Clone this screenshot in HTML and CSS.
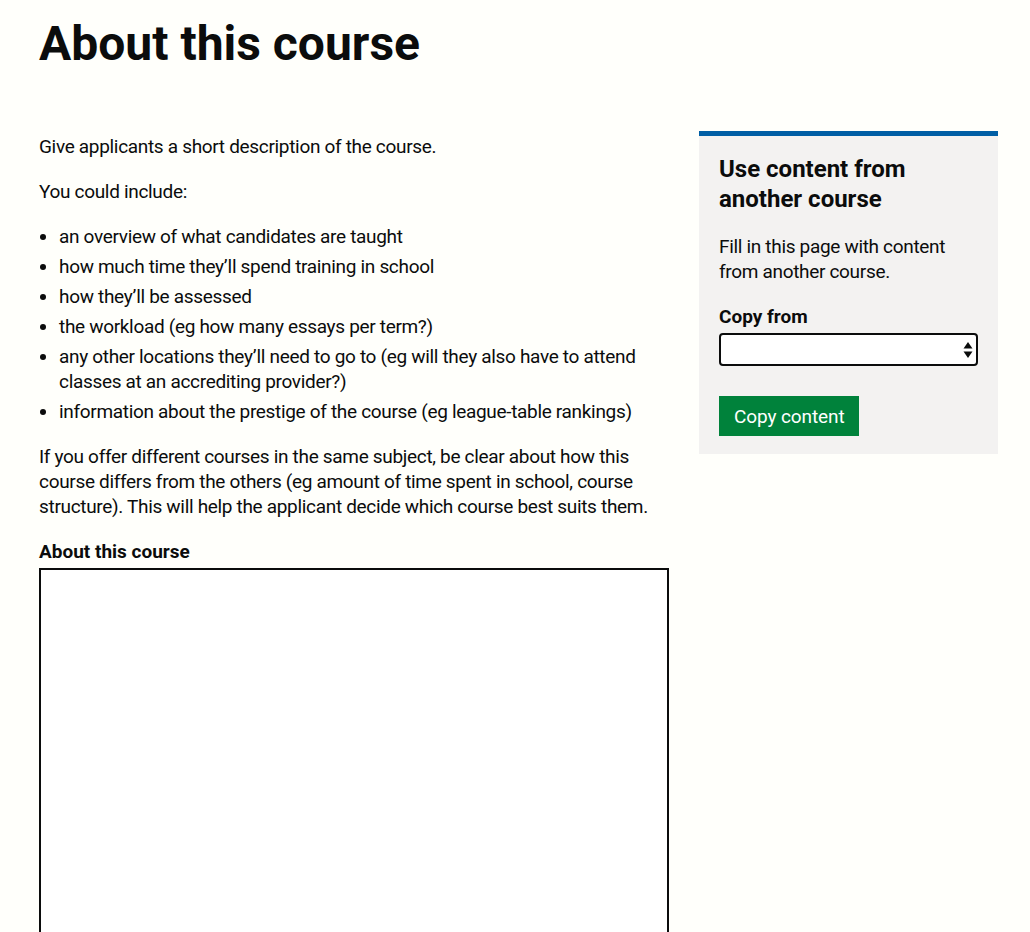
FILE: index.html
```html
<!DOCTYPE html>
<html lang="en">
<head>
<meta charset="utf-8">
<title>About this course</title>
<link rel="stylesheet" href="styles.css">
</head>
<body>
<main class="container">
  <h1 class="heading-xl">About this course</h1>
  <div class="row">
    <div class="col-main">
      <p class="body">Give applicants a short description of the course.</p>
      <p class="body">You could include:</p>
      <ul class="bullets">
        <li>an overview of what candidates are taught</li>
        <li>how much time they’ll spend training in school</li>
        <li>how they’ll be assessed</li>
        <li>the workload (eg how many essays per term?)</li>
        <li>any other locations they’ll need to go to (eg will they also have to attend classes at an accrediting provider?)</li>
        <li>information about the prestige of the course (eg league-table rankings)</li>
      </ul>
      <p class="body">If you offer different courses in the same subject, be clear about how this course differs from the others (eg amount of time spent in school, course structure). This will help the applicant decide which course best suits them.</p>
      <label class="label label-main" for="about">About this course</label>
      <textarea class="textarea" id="about"></textarea>
    </div>
    <aside class="col-side">
      <div class="panel">
        <h2 class="heading-m">Use content from another course</h2>
        <p class="body">Fill in this page with content from another course.</p>
        <label class="label label-side" for="copy">Copy from</label>
        <div class="select-wrap">
          <select class="select" id="copy"><option></option></select>
          <svg class="select-arrows" width="10" height="18" viewBox="0 0 10 18" aria-hidden="true">
            <path d="M5 1 L9.5 7.5 H0.5 Z" fill="#0b0c0c"/>
            <path d="M5 17 L9.5 10.5 H0.5 Z" fill="#0b0c0c"/>
          </svg>
        </div>
        <button class="button" type="button">Copy content</button>
      </div>
    </aside>
  </div>
</main>
</body>
</html>
```
FILE: styles.css
```css
html, body {
  margin: 0;
  padding: 0;
  background: #fffffb;
}
body {
  font-family: Roboto, "Liberation Sans", sans-serif;
  color: #0b0c0c;
  overflow: hidden;
}
.container {
  width: 960px;
  margin: 0 0 0 39px;
}
.heading-xl {
  font-size: 48px;
  line-height: 50px;
  font-weight: 700;
  margin: 19px 0 62px;
}
.row {
  display: flex;
  gap: 30px;
}
.col-main {
  width: 630px;
  padding-top: 3px;
}
.col-side {
  width: 299px;
}
.body {
  font-size: 19px;
  line-height: 25px;
  letter-spacing: -0.32px;
  margin: 0 0 20px;
}
.bullets {
  font-size: 19px;
  line-height: 25px;
  letter-spacing: -0.32px;
  margin: 0 0 20px;
  padding-left: 20px;
}
.bullets li {
  margin-bottom: 5px;
}
.bullets li:last-child {
  margin-bottom: 0;
}
.label {
  display: block;
  font-size: 19px;
  line-height: 25px;
  font-weight: 700;
}
.label-main {
  margin-bottom: 4px;
}
.label-side {
  margin-bottom: 4px;
}
.textarea {
  display: block;
  box-sizing: border-box;
  width: 630px;
  height: 420px;
  border: 2px solid #0b0c0c;
  border-radius: 0;
  background: #fff;
  margin: 0;
  padding: 5px;
  resize: none;
  font: inherit;
}
.panel {
  background: #f3f2f1;
  border-top: 5px solid #005ea5;
  padding: 18px 20px 18px;
}
.heading-m {
  font-size: 24px;
  line-height: 30px;
  font-weight: 700;
  margin: 0 0 20px;
}
.select-wrap {
  position: relative;
  width: 259px;
  margin-bottom: 30px;
}
.select {
  display: block;
  box-sizing: border-box;
  width: 259px;
  height: 33px;
  border: 2px solid #0b0c0c;
  border-radius: 4px;
  background: #fff;
  appearance: none;
  -webkit-appearance: none;
  margin: 0;
  padding: 0 8px;
  font: inherit;
}
.select-arrows {
  position: absolute;
  right: 5px;
  top: 8px;
  pointer-events: none;
}
.button {
  display: block;
  box-sizing: border-box;
  height: 40px;
  width: 140px;
  background: #00823b;
  color: #fff;
  border: 0;
  border-radius: 0;
  padding: 0 15px;
  margin: 0;
  font-family: Roboto, "Liberation Sans", sans-serif;
  font-size: 19px;
  line-height: 25px;
  letter-spacing: -0.1px;
  white-space: nowrap;
  text-align: left;
  cursor: pointer;
}
```
